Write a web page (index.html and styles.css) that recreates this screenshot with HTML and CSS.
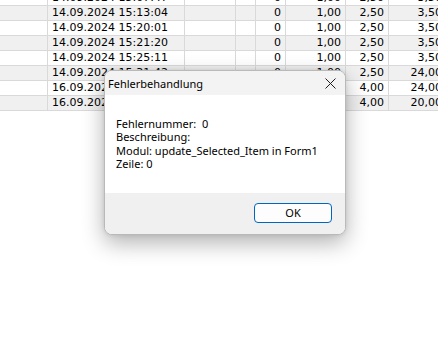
FILE: index.html
```html
<!DOCTYPE html>
<html lang="de">
<head>
<meta charset="utf-8">
<title>Fehlerbehandlung</title>
<link rel="stylesheet" href="styles.css">
</head>
<body>
<div class="screen">
  <table class="grid">
    <tbody>
      <tr class="odd"><td class="c-a"></td><td class="c-b">14.09.2024 15:07:47</td><td class="c-c"></td><td class="c-d"></td><td class="c-e num">0</td><td class="c-f num">1,00</td><td class="c-g num">2,50</td><td class="c-h num">3,50</td></tr>
      <tr class="even"><td class="c-a"></td><td class="c-b">14.09.2024 15:13:04</td><td class="c-c"></td><td class="c-d"></td><td class="c-e num">0</td><td class="c-f num">1,00</td><td class="c-g num">2,50</td><td class="c-h num">3,50</td></tr>
      <tr class="odd"><td class="c-a"></td><td class="c-b">14.09.2024 15:20:01</td><td class="c-c"></td><td class="c-d"></td><td class="c-e num">0</td><td class="c-f num">1,00</td><td class="c-g num">2,50</td><td class="c-h num">3,50</td></tr>
      <tr class="even"><td class="c-a"></td><td class="c-b">14.09.2024 15:21:20</td><td class="c-c"></td><td class="c-d"></td><td class="c-e num">0</td><td class="c-f num">1,00</td><td class="c-g num">2,50</td><td class="c-h num">3,50</td></tr>
      <tr class="odd"><td class="c-a"></td><td class="c-b">14.09.2024 15:25:11</td><td class="c-c"></td><td class="c-d"></td><td class="c-e num">0</td><td class="c-f num">1,00</td><td class="c-g num">2,50</td><td class="c-h num">3,50</td></tr>
      <tr class="even"><td class="c-a"></td><td class="c-b">14.09.2024 15:31:42</td><td class="c-c"></td><td class="c-d"></td><td class="c-e num">0</td><td class="c-f num">1,00</td><td class="c-g num">2,50</td><td class="c-h num">24,00</td></tr>
      <tr class="odd"><td class="c-a"></td><td class="c-b">16.09.2024 09:12:05</td><td class="c-c"></td><td class="c-d"></td><td class="c-e num">0</td><td class="c-f num">1,00</td><td class="c-g num">4,00</td><td class="c-h num">24,00</td></tr>
      <tr class="even"><td class="c-a"></td><td class="c-b">16.09.2024 09:40:33</td><td class="c-c"></td><td class="c-d"></td><td class="c-e num">0</td><td class="c-f num">1,00</td><td class="c-g num">4,00</td><td class="c-h num">20,00</td></tr>
    </tbody>
  </table>

  <div class="dialog" role="dialog" aria-label="Fehlerbehandlung">
    <div class="dialog-title">
      <span class="title-text">Fehlerbehandlung</span>
      <span class="close" aria-label="Schließen">
        <svg width="11" height="11" viewBox="0 0 11 11"><path d="M0.5 0.5 L10.5 10.5 M10.5 0.5 L0.5 10.5" stroke="#1f1f1f" stroke-width="1" fill="none"/></svg>
      </span>
    </div>
    <div class="dialog-body">
      <div>Fehlernummer:&nbsp; 0</div>
      <div>Beschreibung:</div>
      <div>Modul: update_Selected_Item in Form1</div>
      <div>Zeile: 0</div>
    </div>
    <div class="dialog-footer">
      <button class="btn-ok">OK</button>
    </div>
  </div>
</div>
</body>
</html>
```

FILE: styles.css
```css
html, body {
  margin: 0;
  padding: 0;
  background: #ffffff;
}

.screen {
  position: relative;
  width: 438px;
  height: 339px;
  overflow: hidden;
  background: #ffffff;
}

.grid {
  margin-top: -9px;
  border-collapse: separate;
  border-spacing: 0;
  table-layout: fixed;
  width: 447px;
  font-family: "DejaVu Sans", Verdana, sans-serif;
  font-size: 11px;
  color: #000;
}

.grid td {
  box-sizing: border-box;
  height: 15px;
  padding: 0 4px;
  line-height: 14px;
  border-right: 1px solid #d9d9d9;
  border-bottom: 1px solid #d9d9d9;
  white-space: nowrap;
  overflow: hidden;
}

.grid tr.even td { background: #f0f0f0; }
.grid tr.odd td { background: #ffffff; }

.grid td.num { text-align: right; }

.c-a { width: 48px; }
.c-b { width: 137px; }
.c-c { width: 51px; }
.c-d { width: 20px; }
.c-e { width: 30px; }
.c-f { width: 60px; }
.c-g { width: 43px; }
.c-h { width: 58px; }

.dialog {
  position: absolute;
  left: 104px;
  top: 70px;
  width: 242px;
  height: 165px;
  box-sizing: border-box;
  border: 1px solid #b9b9b9;
  border-radius: 8px;
  overflow: hidden;
  background: #ffffff;
  box-shadow: 0 8px 22px rgba(0, 0, 0, 0.30), 0 0 4px rgba(0, 0, 0, 0.10);
  display: flex;
  flex-direction: column;
  font-family: "Noto Sans", "Open Sans", sans-serif;
  font-size: 11px;
  color: #000;
}

.dialog-title {
  height: 24px;
  flex: none;
  display: flex;
  align-items: center;
  justify-content: space-between;
  padding: 0 9px 0 3px;
  background: #f3f3f3;
}

.title-text {
  font-size: 11px;
  color: #000;
}

.close {
  display: flex;
  align-items: center;
}

.dialog-body {
  flex: 1;
  padding: 22px 11px 0;
  line-height: 13.3px;
  background: #ffffff;
}

.dialog-footer {
  height: 41px;
  flex: none;
  box-sizing: border-box;
  display: flex;
  justify-content: flex-end;
  align-items: flex-start;
  padding: 10px 13px 0 0;
  background: #f0f0f0;
}

.btn-ok {
  box-sizing: border-box;
  width: 78px;
  height: 20px;
  padding: 0;
  border: 1px solid #0067c0;
  border-radius: 4px;
  background: #fdfdfd;
  font-family: "Noto Sans", "Open Sans", sans-serif;
  font-size: 11px;
  line-height: 18px;
  color: #000;
}
```
